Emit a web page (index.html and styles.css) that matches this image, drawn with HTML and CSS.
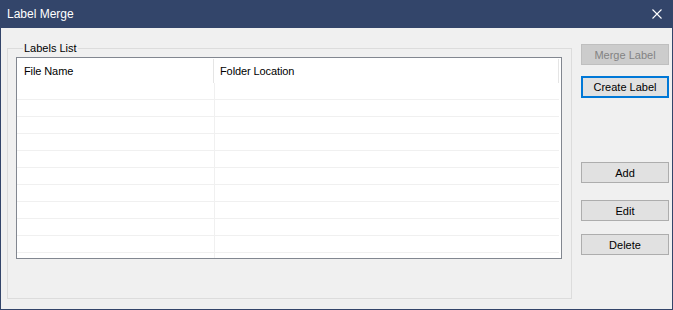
FILE: index.html
```html
<!DOCTYPE html>
<html>
	<head>
		<meta charset="utf-8">
		<link rel="stylesheet" href="styles.css">
		<title>Label Merge</title>
	</head>
	<body>
		<div class="window">
			<header class="titlebar">
				<span class="title">Label Merge</span>
				<svg class="close" width="10" height="10" viewBox="0 0 10 10">
					<path d="M0.5 0.5L9.5 9.5M9.5 0.5L0.5 9.5" stroke="#fff" stroke-width="1.1" fill="none"/>
				</svg>
			</header>
			<div class="content">
				<fieldset class="group">
					<legend>Labels List</legend>
					<div class="list">
						<div class="list-head">
							<div class="col name">File Name</div>
							<div class="col folder">Folder Location</div>
						</div>
						<div class="rows">
							<div class="row"><div class="cell name"></div><div class="cell folder"></div></div>
							<div class="row"><div class="cell name"></div><div class="cell folder"></div></div>
							<div class="row"><div class="cell name"></div><div class="cell folder"></div></div>
							<div class="row"><div class="cell name"></div><div class="cell folder"></div></div>
							<div class="row"><div class="cell name"></div><div class="cell folder"></div></div>
							<div class="row"><div class="cell name"></div><div class="cell folder"></div></div>
							<div class="row"><div class="cell name"></div><div class="cell folder"></div></div>
							<div class="row"><div class="cell name"></div><div class="cell folder"></div></div>
							<div class="row"><div class="cell name"></div><div class="cell folder"></div></div>
							<div class="row"><div class="cell name"></div><div class="cell folder"></div></div>
							<div class="row"><div class="cell name"></div><div class="cell folder"></div></div>
						</div>
					</div>
				</fieldset>
				<div class="buttons">
					<button class="btn merge" disabled>Merge Label</button>
					<button class="btn create">Create Label</button>
					<button class="btn add">Add</button>
					<button class="btn edit">Edit</button>
					<button class="btn delete">Delete</button>
				</div>
			</div>
		</div>
	</body>
</html>
```

FILE: styles.css
```css
* {
	margin: 0;
	padding: 0;
	box-sizing: border-box;
}

body {
	background-color: #f0f0f0;
	font-family: "Liberation Sans", Arial, sans-serif;
	font-size: 11px;
	color: #000;
}

.window {
	width: 673px;
	height: 310px;
	background-color: #f0f0f0;
	border: 1px solid #33456a;
	border-top: none;
	overflow: hidden;
}

.titlebar {
	display: flex;
	align-items: center;
	justify-content: space-between;
	height: 28px;
	margin: 0 -1px;
	padding: 0 11px 0 7px;
	background-color: #33456a;
}

.title {
	font-size: 12px;
	color: #fff;
}

.close {
	display: block;
}

.content {
	display: flex;
	align-items: flex-start;
}

.group {
	margin: 13px 0 0 6px;
	width: 565px;
	height: 258px;
	padding: 2px 9px 0 8px;
	border: 1px solid #dcdcdc;
}

.group legend {
	margin-left: 7px;
	padding: 0 1px;
	line-height: 14px;
}

.list {
	height: 202px;
	border: 1px solid #828790;
	background-color: #fff;
	overflow: hidden;
}

.list-head {
	display: flex;
	height: 25px;
	padding-top: 1px;
}

.col {
	height: 24px;
	padding: 6px 0 0 7px;
	border-right: 1px solid #e5e5e5;
	letter-spacing: -0.1px;
}

.name {
	width: 197px;
}

.folder {
	width: 345px;
}

.col.folder {
	padding-left: 6px;
}

.row {
	display: flex;
	height: 17px;
}

.cell {
	border-bottom: 1px solid #f0f0f0;
}

.cell.name {
	border-right: 1px solid #f0f0f0;
	width: 198px;
}

.cell.folder {
	width: 344px;
}

.buttons {
	display: flex;
	flex-direction: column;
	margin: 16px 0 0 9px;
}

.btn {
	width: 88px;
	height: 21px;
	font-family: inherit;
	font-size: 11px;
	color: #000;
	background-color: #e1e1e1;
	border: 1px solid #adadad;
}

.merge {
	color: #838383;
	background-color: #cccccc;
	border-color: #bfbfbf;
}

.create {
	margin-top: 11px;
	height: 22px;
	border: 2px solid #0078d7;
}

.add {
	margin-top: 64px;
}

.edit {
	margin-top: 17px;
}

.delete {
	margin-top: 13px;
}
```
